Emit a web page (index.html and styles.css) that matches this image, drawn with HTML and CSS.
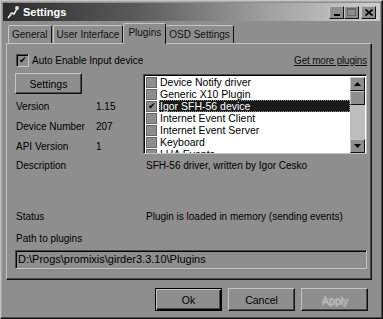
FILE: index.html
```html
<!DOCTYPE html>
<html lang="en">
<head>
    <meta charset="UTF-8">
    <title>Settings</title>
    <link rel="stylesheet" href="styles.css">
</head>
<body>
    <div class="window">
        <div class="titlebar">
            <svg class="app-icon" width="14" height="14" viewBox="0 0 14 14">
                <path d="M2 13 L6 8 L8 9 L12 2" stroke="#fff" stroke-width="1.5" fill="none"/>
                <circle cx="11" cy="3" r="2" fill="#ddd"/>
                <circle cx="5" cy="9" r="1.5" fill="#bbb"/>
            </svg>
            <span class="title">Settings</span>
            <div class="caption-btns">
                <span class="cbtn"><svg width="8" height="7" viewBox="0 0 8 7"><rect x="1" y="5" width="6" height="2" fill="#000"/></svg></span>
                <span class="cbtn"><svg width="9" height="8" viewBox="0 0 9 8"><rect x="0.5" y="0.5" width="8" height="7" fill="none" stroke="#666"/><rect x="0" y="0" width="9" height="2" fill="#666"/></svg></span>
                <span class="cbtn close"><svg width="8" height="7" viewBox="0 0 8 7"><path d="M0.5 0.5 L7.5 6.5 M7.5 0.5 L0.5 6.5" stroke="#000" stroke-width="1.6"/></svg></span>
            </div>
        </div>

        <div class="tabs">
            <div class="tab">General</div>
            <div class="tab">User Interface</div>
            <div class="tab active">Plugins</div>
            <div class="tab">OSD Settings</div>
        </div>

        <div class="panel">
            <div class="top-row">
                <label class="check"><span class="box">&#10004;</span>Auto Enable Input device</label>
                <span class="link">Get more plugins</span>
            </div>

            <div class="middle">
                <div class="info">
                    <button class="btn settings-btn">Settings</button>
                    <div class="info-row first"><span class="label">Version</span><span>1.15</span></div>
                    <div class="info-row"><span class="label">Device Number</span><span>207</span></div>
                    <div class="info-row"><span class="label">API Version</span><span>1</span></div>
                </div>
                <div class="listbox">
                    <ul class="items">
                        <li><span class="ibox"></span><span class="itext">Device Notify driver</span></li>
                        <li><span class="ibox"></span><span class="itext">Generic X10 Plugin</span></li>
                        <li class="selected"><span class="ibox">&#10004;</span><span class="itext">Igor SFH-56 device</span></li>
                        <li><span class="ibox"></span><span class="itext">Internet Event Client</span></li>
                        <li><span class="ibox"></span><span class="itext">Internet Event Server</span></li>
                        <li><span class="ibox"></span><span class="itext">Keyboard</span></li>
                        <li><span class="ibox"></span><span class="itext">LUA Events</span></li>
                    </ul>
                    <div class="scrollbar">
                        <span class="sbtn"><svg width="7" height="4" viewBox="0 0 7 4"><path d="M0 4 L3.5 0 L7 4 Z" fill="#000"/></svg></span>
                        <span class="thumb"></span>
                        <span class="track"></span>
                        <span class="sbtn"><svg width="7" height="4" viewBox="0 0 7 4"><path d="M0 0 L3.5 4 L7 0 Z" fill="#000"/></svg></span>
                    </div>
                </div>
            </div>

            <div class="detail desc"><span class="label">Description</span><span>SFH-56 driver, written by Igor Cesko</span></div>
            <div class="detail status"><span class="label">Status</span><span>Plugin is loaded in memory (sending events)</span></div>

            <div class="path-label">Path to plugins</div>
            <div class="path-input">D:\Progs\promixis\girder3.3.10\Plugins</div>
        </div>

        <div class="footer">
            <button class="btn default">Ok</button>
            <button class="btn">Cancel</button>
            <button class="btn disabled-btn">Apply</button>
        </div>
    </div>
</body>
</html>
```

FILE: styles.css
```css
:root {
    --face: #8e8e8e;
    --light: #c4c4c4;
    --shadow: #4a4a4a;
    --dark: #111;
}

* {
    margin: 0;
    padding: 0;
    box-sizing: border-box;
}

body {
    background: #fff;
    font-family: "Liberation Sans", Arial, sans-serif;
    font-size: 10px;
    color: #000;
}

.window {
    width: 383px;
    height: 319px;
    background: var(--face);
    border: 1px solid var(--light);
    border-right-color: var(--dark);
    border-bottom-color: var(--dark);
    box-shadow: inset -1px -1px 0 var(--shadow), inset 1px 1px 0 #a8a8a8;
    padding: 2px;
    display: flex;
    flex-direction: column;
}

.titlebar {
    height: 18px;
    flex: none;
    display: flex;
    align-items: center;
    padding-left: 3px;
    background: linear-gradient(to right, #2c2c2c 0%, #5a5a5a 35%, #a0a0a0 70%, #cfcfcf 100%);
}

.app-icon {
    margin-right: 3px;
}

.title {
    color: #fff;
    font-weight: bold;
    font-size: 11px;
    flex: 1;
}

.caption-btns {
    display: flex;
    margin-right: 4px;
}

.cbtn {
    width: 15px;
    height: 13px;
    background: var(--face);
    border: 1px solid var(--light);
    border-right-color: var(--dark);
    border-bottom-color: var(--dark);
    display: flex;
    align-items: center;
    justify-content: center;
}

.cbtn.close {
    margin-left: 2px;
}

.tabs {
    display: flex;
    align-items: flex-end;
    height: 21px;
    flex: none;
    padding-left: 5px;
    margin-top: 1px;
}

.tab {
    height: 18px;
    padding: 0 3px;
    line-height: 17px;
    font-size: 10px;
    color: #111;
    border: 1px solid var(--light);
    border-bottom: none;
    border-right-color: var(--dark);
    border-radius: 2px 2px 0 0;
    margin-right: 1px;
}

.tab.active {
    height: 21px;
    line-height: 18px;
    margin: 0 -1px -1px -1px;
    padding: 0 4px;
    position: relative;
    z-index: 1;
    background: var(--face);
}

.panel {
    height: 237px;
    flex: none;
    margin: 0 8px 0 3px;
    border: 1px solid var(--light);
    border-right-color: var(--dark);
    border-bottom-color: var(--dark);
    box-shadow: inset -1px -1px 0 var(--shadow);
    padding: 9px 4px 0 8px;
}

.top-row {
    display: flex;
    justify-content: space-between;
    align-items: center;
    height: 14px;
}

.check {
    display: flex;
    align-items: center;
}

.box {
    width: 13px;
    height: 13px;
    background: var(--face);
    border: 1px solid var(--shadow);
    border-right-color: var(--light);
    border-bottom-color: var(--light);
    box-shadow: inset 1px 1px 0 #000;
    margin: 0 3px 0 1px;
    font-size: 9px;
    line-height: 11px;
    text-align: center;
}

.link {
    text-decoration: underline;
    color: #111;
    letter-spacing: -0.2px;
}

.middle {
    display: flex;
    justify-content: space-between;
    height: 83px;
    margin-top: 6px;
}

.info {
    width: 120px;
}

.btn {
    font-family: inherit;
    font-size: 10.5px;
    color: #000;
    background: var(--face);
    border: 1px solid var(--light);
    border-right-color: var(--dark);
    border-bottom-color: var(--dark);
    box-shadow: inset -1px -1px 0 var(--shadow);
}

.settings-btn {
    width: 67px;
    height: 21px;
}

.info-row {
    display: flex;
    height: 20px;
    align-items: center;
    padding-left: 1px;
}

.info-row.first {
    margin-top: 2px;
}

.label {
    width: 80px;
    flex: none;
}

.listbox {
    width: 224px;
    height: 80px;
    margin-top: 1px;
    background: #fff;
    border: 1px solid var(--shadow);
    border-right-color: var(--light);
    border-bottom-color: var(--light);
    box-shadow: inset 1px 1px 0 #000;
    display: flex;
    overflow: hidden;
    padding: 1px 0 0 2px;
}

.items {
    list-style: none;
    flex: 1;
    font-size: 10.5px;
}

.items li {
    height: 12px;
    display: flex;
    align-items: center;
}

.ibox {
    width: 11px;
    height: 11px;
    flex: none;
    background: var(--face);
    border: 1px solid #666;
    margin-right: 2px;
    font-size: 9px;
    line-height: 9px;
    text-align: center;
}

.itext {
    flex: 1;
    height: 12px;
    line-height: 12px;
    padding-left: 1px;
}

.selected .itext {
    background: #1a1a1a;
    color: #fff;
    outline: 1px dotted #888;
    outline-offset: -1px;
}

.scrollbar {
    width: 15px;
    display: flex;
    flex-direction: column;
    background: #bdbdbd;
    margin: 1px 1px 0 0;
}

.sbtn,
.thumb {
    height: 14px;
    flex: none;
    background: var(--face);
    border: 1px solid var(--light);
    border-right-color: var(--dark);
    border-bottom-color: var(--dark);
    display: flex;
    align-items: center;
    justify-content: center;
}

.track {
    flex: 1;
}

.detail {
    display: flex;
    height: 14px;
    line-height: 14px;
    margin-top: 3px;
    padding-left: 1px;
}

.detail .label {
    width: 130px;
}

.status {
    margin-top: 37px;
}

.path-label {
    height: 14px;
    line-height: 14px;
    margin-top: 8px;
    padding-left: 1px;
}

.path-input {
    height: 19px;
    margin-top: 4px;
    border: 1px solid var(--shadow);
    border-right-color: var(--light);
    border-bottom-color: var(--light);
    box-shadow: inset 1px 1px 0 #000;
    padding: 0 2px;
    line-height: 17px;
    font-size: 11px;
}

.footer {
    display: flex;
    justify-content: flex-end;
    gap: 6px;
    padding: 8px 12px 0 0;
}

.footer .btn {
    width: 67px;
    height: 23px;
}

.footer .default {
    border: 1px solid #000;
    box-shadow: inset 1px 1px 0 var(--light), inset -1px -1px 0 #000, inset -2px -2px 0 var(--shadow);
}

.disabled-btn {
    color: #b0b0b0;
    text-shadow: 1px 1px 0 #c8c8c8;
}
```
